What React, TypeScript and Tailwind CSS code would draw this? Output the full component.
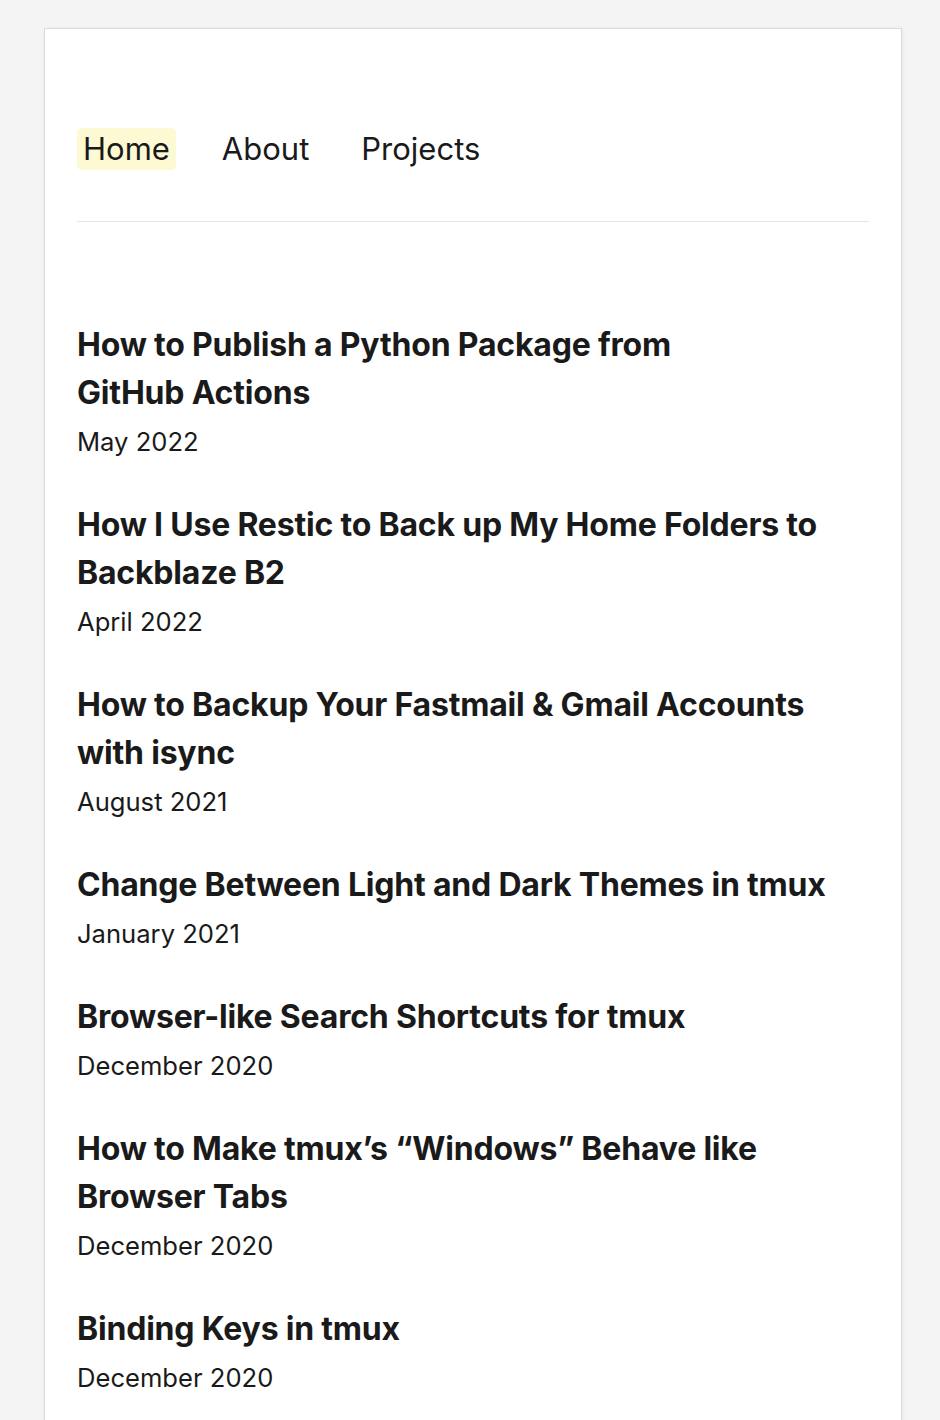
const posts = [
  { title: "How to Publish a Python Package from GitHub\u00a0Actions", date: "May 2022" },
  { title: "How I Use Restic to Back up My Home Folders to Backblaze\u00a0B2", date: "April 2022" },
  { title: "How to Backup Your Fastmail & Gmail Accounts with\u00a0isync", date: "August 2021" },
  { title: "Change Between Light and Dark Themes in\u00a0tmux", date: "January 2021" },
  { title: "Browser-like Search Shortcuts for\u00a0tmux", date: "December 2020" },
  { title: "How to Make tmux\u2019s \u201cWindows\u201d Behave like Browser\u00a0Tabs", date: "December 2020" },
  { title: "Binding Keys in\u00a0tmux", date: "December 2020" },
];

const nav = [
  { label: "Home", active: true },
  { label: "About", active: false },
  { label: "Projects", active: false },
];

export default function App() {
  return (
    <div className="min-h-screen bg-[#f4f4f4] pt-[28px] font-['Inter','Noto_Sans',sans-serif] text-[#1a1a1a]">
      <div className="ml-[44px] w-[858px] border border-[#dadada] bg-white px-[32px] pb-16 shadow-[1px_1px_4px_rgba(0,0,0,0.05)]">
        <nav className="flex items-center gap-[40px] pt-[99px] pb-[51px] border-b border-[#e6e6e6]">
          {nav.map((item) => (
            <a
              key={item.label}
              href="#"
              className={
                item.active
                  ? "rounded-[5px] bg-[#fdf9d3] px-[6px] text-[31px] leading-[42px]"
                  : "px-[6px] text-[31px] leading-[42px]"
              }
            >
              {item.label}
            </a>
          ))}
        </nav>
        <ul className="flex flex-col gap-[35px] pt-[99px]">
          {posts.map((post) => (
            <li key={post.title} className="flex flex-col">
              <a href="#" className="text-[32px] font-bold leading-[48px] tracking-[-0.2px]">
                {post.title}
              </a>
              <span className="mt-[1px] text-[25.6px] leading-[48px]">{post.date}</span>
            </li>
          ))}
        </ul>
      </div>
    </div>
  );
}
